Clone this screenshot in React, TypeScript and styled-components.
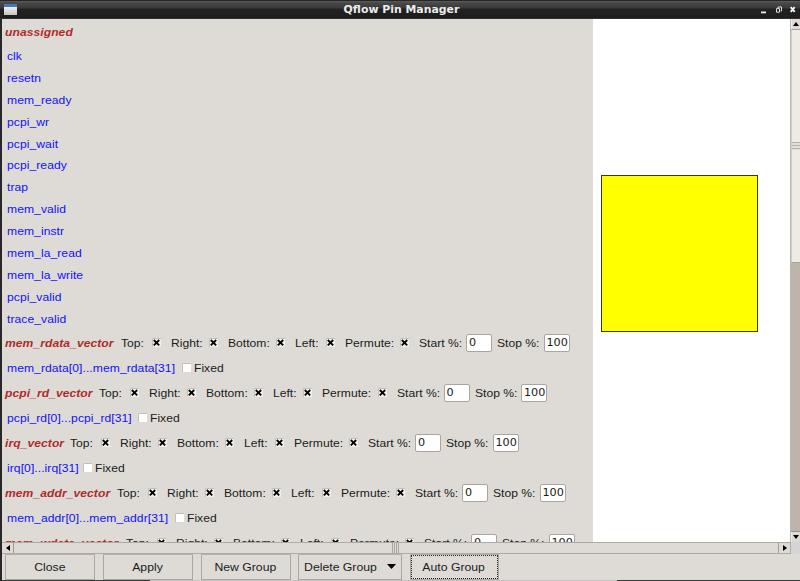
import React from "react";
import styled, { createGlobalStyle, css } from "styled-components";

const Global = createGlobalStyle`
  * { box-sizing: border-box; }
  html, body { margin: 0; padding: 0; }
  body { width: 800px; height: 581px; overflow: hidden; background: #262425; }
`;

const Window = styled.div`
  width: 800px;
  height: 581px;
  display: flex;
  flex-direction: column;
  overflow: hidden;
  padding-left: 2px;
  background: #29272a;
  color: #1b1b1b;
  font: 11.6px/16px "Liberation Sans", Arial, sans-serif;
`;

const TitleBar = styled.header`
  flex: 0 0 19px;
  margin-left: -2px;
  display: flex;
  align-items: center;
  padding: 0 4px 0 4px;
  border-top: 1px solid #252525;
  border-bottom: 1px solid #303030;
  background: linear-gradient(#5c5c5c 0, #474747 2px, #3a3a3a 7px, #222 8px, #1d1d1d 100%);
`;

const AppIcon = styled.svg`
  width: 14px;
  height: 13px;
  flex: none;
`;

const Title = styled.h1`
  flex: 1;
  margin: 0;
  padding-left: 27px;
  text-align: center;
  font: bold 10.9px/16px "DejaVu Sans", sans-serif;
  color: #ececec;
  white-space: nowrap;
`;

const WindowControls = styled.svg`
  width: 38px;
  height: 12px;
  flex: none;
`;

const Main = styled.main`
  flex: 0 0 523px;
  display: flex;
  background: #fff;
`;

const PinList = styled.section`
  width: 591px;
  height: 523px;
  overflow: hidden;
  background: #dedbd6;
`;

const Row = styled.div<{ $h: number }>`
  height: ${(p) => p.$h}px;
  display: flex;
  align-items: center;
  white-space: nowrap;
`;

const wide = css`
  display: inline-block;
  transform: scaleX(1.045);
  transform-origin: 0 50%;
`;

const GroupName = styled.span<{ $w?: number }>`
  ${wide}
  margin-left: 3px;
  margin-right: 0.5px;
  width: ${(p) => (p.$w ? `${p.$w}px` : "auto")};
  letter-spacing: 0.05px;
  font-weight: bold;
  font-style: italic;
  color: #ae2b2b;
`;

const PinName = styled.span<{ $w?: number }>`
  ${wide}
  margin-left: 5px;
  width: ${(p) => (p.$w ? `${p.$w}px` : "auto")};
  letter-spacing: 0.06px;
  color: #1010ff;
`;

const Label = styled.span<{ $w: number }>`
  ${wide}
  width: ${(p) => p.$w}px;
  flex: none;
`;

const Check = styled.svg<{ $gap?: number }>`
  width: 9px;
  height: 9px;
  flex: none;
  margin-right: ${(p) => p.$gap ?? 0}px;
`;

const Entry = styled.span<{ $gap?: number }>`
  width: 26px;
  height: 18px;
  flex: none;
  margin-right: ${(p) => p.$gap ?? 0}px;
  padding-left: 2px;
  border: 1px solid #aaa59e;
  border-radius: 2px;
  background: #fff;
  font: 11.2px/15px "DejaVu Sans", sans-serif;
`;

const Preview = styled.section`
  width: 197px;
  padding: 156px 0 0 8px;
  background: #fff;
`;

const Core = styled.div`
  width: 157px;
  height: 157px;
  border: 1px solid #38380a;
  background: #ff0;
`;

const VScroll = styled.aside`
  width: 10px;
  display: flex;
  flex-direction: column;
  border-left: 1px solid #bab7b2;
  background: #bdb5ab;
`;

const arrowBox = css`
  flex: none;
  display: flex;
  align-items: center;
  justify-content: center;
  background: #dedbd6;
`;

const VArrow = styled.div<{ $h: number }>`
  ${arrowBox}
  height: ${(p) => p.$h}px;
  border-left: 1px solid #f1efec;
`;

const VThumb = styled.div`
  height: 234px;
  display: flex;
  align-items: center;
  border: solid #a8a49d;
  border-width: 1px 0;
  border-left: 1px solid #d3d0cb;
  background: #eeebe7;
`;

const VGrip = styled.div`
  width: 100%;
  height: 8px;
  background: repeating-linear-gradient(#b7b4af 0 1px, #e2dfda 1px 3px);
`;

const VTrough = styled.div`
  flex: 1;
  border-bottom: 1px solid #98938c;
`;

const HScroll = styled.div`
  flex: 0 0 12px;
  display: flex;
  background: #dedbd6;
`;

const HTrack = styled.div`
  width: 789px;
  display: flex;
  border: solid #aeaaa3;
  border-width: 1px 1px 1px 0;
`;

const HArrow = styled.div`
  ${arrowBox}
  width: 11px;
`;

const HThumb = styled.div`
  flex: 1;
  display: flex;
  justify-content: center;
  border: solid #9e9a94;
  border-width: 0 1px;
  background: #dedbd6;
`;

const HGrip = styled.div`
  width: 7px;
  margin-left: -2px;
  background: repeating-linear-gradient(90deg, #aaa69f 0 1px, #dedbd6 1px 2px);
`;

const Corner = styled.div`
  flex: 1;
  background: #d6d5d6;
`;

const Actions = styled.footer`
  flex: 0 0 26px;
  display: flex;
  padding-left: 3px;
  background: #dedbd6;
`;

const Button = styled.button<{ $w: number; $gap: number; $focused?: boolean }>`
  width: ${(p) => p.$w}px;
  height: 26px;
  margin: 0 ${(p) => p.$gap}px 0 0;
  padding: 0 1px 1px 0;
  display: flex;
  align-items: center;
  justify-content: center;
  border: 1px solid #aaa7a1;
  border-top-color: #b5b2ad;
  border-radius: 1px;
  background: #dedbd6;
  color: #1b1b1b;
  font: inherit;
  white-space: nowrap;
  outline: ${(p) => (p.$focused ? "1px dotted #222" : "none")};
  outline-offset: -2px;
`;

const ButtonText = styled.span`
  display: inline-block;
  transform: scaleX(1.055);
`;

const Caret = styled.svg`
  width: 9px;
  height: 5px;
  margin-left: 13px;
  margin-right: -3px;
`;

const BottomEdge = styled.div`
  flex: 1;
  background: linear-gradient(90deg, #3b383c 0 148px, #c6c2c3 148px 615px, #3b383c 615px);
`;

const PINS = [
  "clk", "resetn", "mem_ready", "pcpi_wr", "pcpi_wait", "pcpi_ready", "trap",
  "mem_valid", "mem_instr", "mem_la_read", "mem_la_write", "pcpi_valid", "trace_valid",
];

const GROUPS = [
  { name: "mem_rdata_vector", w: 115.5, pins: "mem_rdata[0]...mem_rdata[31]", pw: 174.5 },
  { name: "pcpi_rd_vector", w: 93, pins: "pcpi_rd[0]...pcpi_rd[31]", pw: 131 },
  { name: "irq_vector", w: 64.5, pins: "irq[0]...irq[31]", pw: 76 },
  { name: "mem_addr_vector", w: 111.5, pins: "mem_addr[0]...mem_addr[31]", pw: 168 },
  { name: "mem_wdata_vector", w: 120.5 },
];

const SIDES = [
  { label: "Top:", w: 31 },
  { label: "Right:", w: 38 },
  { label: "Bottom:", w: 48 },
  { label: "Left:", w: 30.5 },
  { label: "Permute:", w: 55.5 },
];

function CheckBox({ on, gap }: { on?: boolean; gap?: number }) {
  return (
    <Check viewBox="0 0 9 9" $gap={gap}>
      <path d="M0 0h9v9H0z" fill={on ? "#f1f0ed" : "#fff"} />
      <path d="M.5 9V.5H9" fill="none" stroke="#c3c0bb" />
      {on && <path d="M1.8 2l5.4 5.4M7.2 2L1.8 7.4" stroke="#000" strokeWidth="1.8" />}
    </Check>
  );
}

export default function App() {
  return (
    <>
      <Global />
      <Window>
        <TitleBar>
          <AppIcon viewBox="0 0 14 13">
            <defs>
              <linearGradient id="page" x2="0" y2="1">
                <stop stopColor="#fff" />
                <stop offset="1" stopColor="#c4c4c4" />
              </linearGradient>
            </defs>
            <path d="M0 1h13v11H0z" fill="url(#page)" />
            <path d="M0 1h13v3H0z" fill="#4678b4" />
          </AppIcon>
          <Title>Qflow Pin Manager</Title>
          <WindowControls viewBox="0 0 38 12">
            <path d="M3 7.5h5v1.8H3z" fill="#eee" />
            <path d="M20 4v-1h3.5v4h-1M18.5 4.6h3v3.6h-3z" fill="none" stroke="#ddd" strokeWidth="1" />
            <path d="M32.7 3.2l4 4.6M36.7 3.2l-4 4.6" stroke="#f3f3f3" strokeWidth="1.9" />
          </WindowControls>
        </TitleBar>
        <Main>
          <PinList>
            <Row $h={26}><GroupName>unassigned</GroupName></Row>
            {PINS.map((pin) => (
              <Row key={pin} $h={21.92}><PinName>{pin}</PinName></Row>
            ))}
            {GROUPS.map((g) => (
              <React.Fragment key={g.name}>
                <Row $h={26}>
                  <GroupName $w={g.w}>{g.name}</GroupName>
                  {SIDES.map((s) => (
                    <React.Fragment key={s.label}>
                      <Label $w={s.w}>{s.label}</Label>
                      <CheckBox on gap={10} />
                    </React.Fragment>
                  ))}
                  <Label $w={47}>Start %:</Label>
                  <Entry $gap={5}>0</Entry>
                  <Label $w={46.5}>Stop %:</Label>
                  <Entry>100</Entry>
                </Row>
                {g.pins && (
                  <Row $h={24}>
                    <PinName $w={g.pw}>{g.pins}</PinName>
                    <CheckBox gap={3} />
                    <Label $w={40}>Fixed</Label>
                  </Row>
                )}
              </React.Fragment>
            ))}
          </PinList>
          <Preview><Core /></Preview>
          <VScroll>
            <VArrow $h={10}>
              <svg width="6" height="4" viewBox="0 0 6 4"><path d="M0 4L3 0l3 4z" /></svg>
            </VArrow>
            <VThumb><VGrip /></VThumb>
            <VTrough />
            <VArrow $h={10}>
              <svg width="6" height="4" viewBox="0 0 6 4"><path d="M0 0h6L3 4z" /></svg>
            </VArrow>
          </VScroll>
        </Main>
        <HScroll>
          <HTrack>
            <HArrow><svg width="4" height="6" viewBox="0 0 4 6"><path d="M4 0v6L0 3z" /></svg></HArrow>
            <HThumb><HGrip /></HThumb>
            <HArrow><svg width="4" height="6" viewBox="0 0 4 6"><path d="M0 0l4 3-4 3z" /></svg></HArrow>
          </HTrack>
          <Corner />
        </HScroll>
        <Actions>
          <Button $w={90} $gap={8}><ButtonText>Close</ButtonText></Button>
          <Button $w={90} $gap={8}><ButtonText>Apply</ButtonText></Button>
          <Button $w={90} $gap={7}><ButtonText>New Group</ButtonText></Button>
          <Button $w={104} $gap={8}>
            <ButtonText>Delete Group</ButtonText>
            <Caret viewBox="0 0 9 5"><path d="M0 0h9L4.5 5z" /></Caret>
          </Button>
          <Button $w={89} $gap={0} $focused><ButtonText>Auto Group</ButtonText></Button>
        </Actions>
        <BottomEdge />
      </Window>
    </>
  );
}
